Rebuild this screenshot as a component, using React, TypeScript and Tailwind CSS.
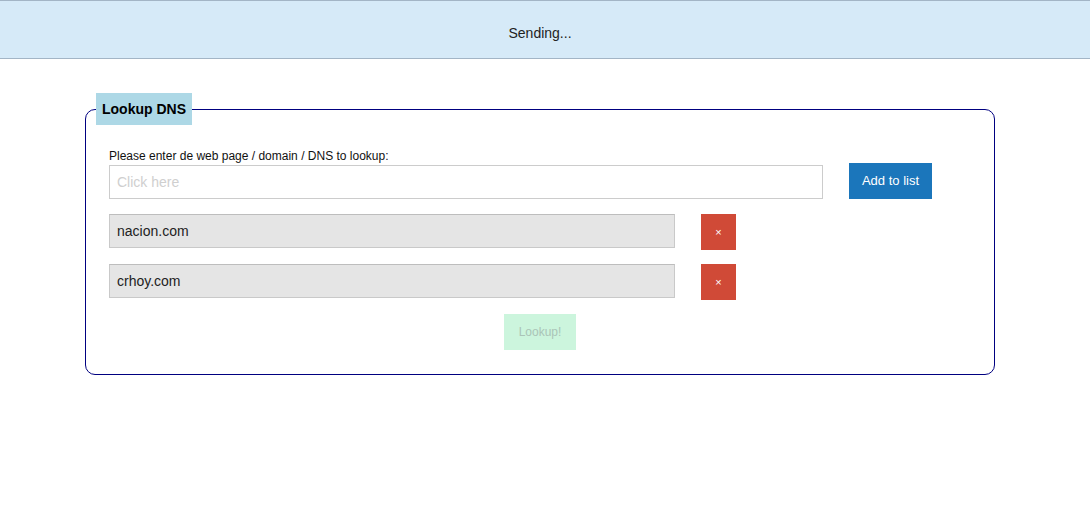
import React from "react";

const domains = ["nacion.com", "crhoy.com"];

const App: React.FC = () => {
  return (
    <div className="min-h-[516px] bg-white text-black font-['Liberation_Sans',Arial,sans-serif]">
      <div className="h-[59px] flex items-center justify-center border-y border-[#a3b5c6] bg-[#d6eaf8] pt-[8px] pr-[10px] text-[14px] text-[#222]">
        Sending...
      </div>

      <fieldset className="ml-[85px] mt-[34px] w-[910px] rounded-[10px] border border-[#000080] px-[23px] pb-[24px]">
        <legend className="-ml-[13px] bg-[#add8e6] px-[6px] py-[8px] text-[14px] font-bold leading-[16px] text-black">
          Lookup DNS
        </legend>

        <div className="pt-[21px]">
          <label className="block pt-[3px] text-[12px] leading-[14px] text-[#111]">
            Please enter de web page / domain / DNS to lookup:
          </label>
          <div className="flex items-end gap-[26px]">
            <input
              type="text"
              placeholder="Click here"
              className="h-[34px] w-[714px] border border-[#cccccc] bg-white px-[7px] text-[14px] outline-none placeholder:text-[#cfcfcf]"
            />
            <button className="h-[36px] w-[83px] bg-[#1b76bb] text-[13px] text-white">
              Add to list
            </button>
          </div>

          <div className="mt-[15px] flex flex-col gap-[14px]">
            {domains.map((d) => (
              <div key={d} className="flex items-start gap-[26px]">
                <input
                  type="text"
                  readOnly
                  value={d}
                  className="h-[34px] w-[566px] border border-[#c9c9c9] border-t-[#bdbdbd] bg-[#e5e5e5] px-[7px] text-[14px] text-[#222] outline-none"
                />
                <button className="flex h-[36px] w-[35px] items-center justify-center bg-[#d04a37] text-[11px] text-white">
                  ×
                </button>
              </div>
            ))}
          </div>

          <div className="mt-[14px] flex justify-center">
            <button className="h-[36px] w-[72px] bg-[#ccf5dd] text-[12px] text-[#aac4b7]">
              Lookup!
            </button>
          </div>
        </div>
      </fieldset>
    </div>
  );
};

export default App;
